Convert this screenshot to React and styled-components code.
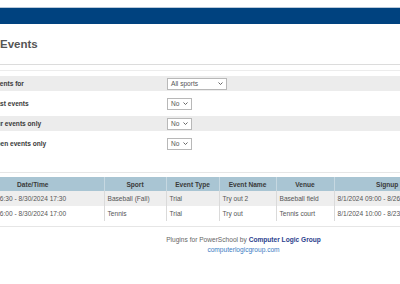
import React from "react";
import styled, { createGlobalStyle } from "styled-components";

const GlobalStyle = createGlobalStyle`
  html, body {
    margin: 0;
    padding: 0;
    background: #ffffff;
    overflow: hidden;
  }
  body {
    font-family: "Liberation Sans", Arial, sans-serif;
    color: #333;
  }
`;

const Page = styled.div`
  width: 563px;
  margin-left: -38px;
  padding-top: 7px;
`;

const NavBar = styled.div`
  height: 16px;
  background: #00427f;
  border-top: 1px solid #b9c9da;
`;

const Title = styled.h1`
  margin: 0;
  height: 40px;
  line-height: 40px;
  padding-left: 38px;
  font-size: 11.5px;
  font-weight: bold;
  color: #555;
  border-bottom: 1px solid #dcdcdc;
`;

const Divider = styled.div`
  height: 1px;
  background: ${(p) => p.$color || "#e8e8e8"};
  margin-top: ${(p) => p.$gap}px;
`;

const Filters = styled.div`
  display: grid;
  grid-auto-rows: 15px;
  row-gap: 5px;
  padding-top: 5px;
`;

const FilterRow = styled.div`
  display: grid;
  grid-template-columns: 194px 1fr;
  align-items: center;
  padding-left: 11px;
  background: ${(p) => (p.$shaded ? "#ececec" : "transparent")};
`;

const FilterLabel = styled.span`
  font-size: 6.6px;
  font-weight: bold;
  color: #3a3a3a;
  white-space: nowrap;
`;

const SelectBox = styled.div`
  box-sizing: border-box;
  width: ${(p) => p.$width}px;
  height: 12px;
  border: 1px solid #b8b8b8;
  background: #fff;
  display: flex;
  align-items: center;
  justify-content: space-between;
  padding: 0 3px 0 3px;
  font-size: 6.6px;
  color: #555;
`;

const Chevron = () => (
  <svg width="5" height="3" viewBox="0 0 5 3">
    <path d="M0.5 0.5 L2.5 2.5 L4.5 0.5" fill="none" stroke="#555" strokeWidth="0.9" />
  </svg>
);

const Select = ({ width, value }) => (
  <SelectBox $width={width}>
    <span>{value}</span>
    <Chevron />
  </SelectBox>
);

const DataTable = styled.table`
  margin-top: 4px;
  border-collapse: collapse;
  table-layout: fixed;
  width: 495px;
  font-size: 6.6px;
`;

const HeadCell = styled.th`
  height: 14px;
  padding: 0 3px;
  background: #a9c5d3;
  color: #3a3a3a;
  font-weight: bold;
  text-align: center;
  border-left: 1px solid #c6d8e1;
  white-space: nowrap;
  overflow: hidden;
  &:first-child { border-left: none; }
`;

const BodyRow = styled.tr`
  background: ${(p) => (p.$shaded ? "#eeeeee" : "#ffffff")};
`;

const Cell = styled.td`
  height: 15px;
  padding: 0 3px;
  color: #555;
  text-align: left;
  border-left: 1px solid #dadada;
  white-space: nowrap;
  overflow: hidden;
  &:first-child { border-left: none; }
`;

const Footer = styled.div`
  padding-top: 8px;
  text-align: center;
  font-size: 6.6px;
  line-height: 10px;
  color: #666;
`;

const Brand = styled.span`
  font-weight: bold;
  color: #2c3f8e;
`;

const SiteLink = styled.a`
  display: block;
  color: #3b7cc3;
  text-decoration: none;
`;

const columns = [
  { title: "Date/Time", width: 142 },
  { title: "Sport", width: 62 },
  { title: "Event Type", width: 53 },
  { title: "Event Name", width: 57 },
  { title: "Venue", width: 58 },
  { title: "Signup Time", width: 123 },
];

const rows = [
  ["8/30/2024 16:30 - 8/30/2024 17:30", "Baseball (Fall)", "Trial", "Try out 2", "Baseball field", "8/1/2024 09:00 - 8/26/2024 17:00"],
  ["8/30/2024 16:00 - 8/30/2024 17:00", "Tennis", "Trial", "Try out", "Tennis court", "8/1/2024 10:00 - 8/23/2024 17:00"],
];

const filters = [
  { label: "Show events for", value: "All sports", width: 60 },
  { label: "Show past events", value: "No", width: 25 },
  { label: "Show our events only", value: "No", width: 25 },
  { label: "Show open events only", value: "No", width: 25 },
];

export default function App() {
  return (
    <>
      <GlobalStyle />
      <Page>
        <NavBar />
        <Title>Events</Title>
        <Divider $gap={5} $color="#ececec" />
        <Filters>
          {filters.map((f, i) => (
            <FilterRow key={f.label} $shaded={i % 2 === 0}>
              <FilterLabel>{f.label}</FilterLabel>
              <Select width={f.width} value={f.value} />
            </FilterRow>
          ))}
        </Filters>
        <Divider $gap={21} $color="#e6e6e6" />
        <DataTable>
          <colgroup>
            {columns.map((c) => (
              <col key={c.title} style={{ width: c.width }} />
            ))}
          </colgroup>
          <thead>
            <tr>
              {columns.map((c) => (
                <HeadCell key={c.title}>{c.title}</HeadCell>
              ))}
            </tr>
          </thead>
          <tbody>
            {rows.map((r, i) => (
              <BodyRow key={i} $shaded={i % 2 === 0}>
                {r.map((v, j) => (
                  <Cell key={j}>{v}</Cell>
                ))}
              </BodyRow>
            ))}
          </tbody>
        </DataTable>
        <Divider $gap={5} $color="#e6e6e6" />
        <Footer>
          Plugins for PowerSchool by <Brand>Computer Logic Group</Brand>
          <SiteLink href="#">computerlogicgroup.com</SiteLink>
        </Footer>
      </Page>
    </>
  );
}
